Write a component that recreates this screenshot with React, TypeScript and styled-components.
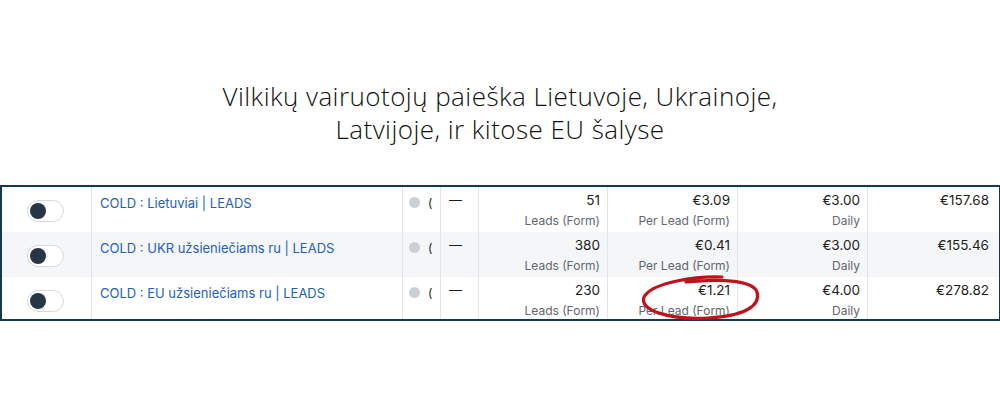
import React from "react";
import styled, { createGlobalStyle } from "styled-components";

const Global = createGlobalStyle`
  body {
    margin: 0;
    background: #fff;
    font-family: Inter, "Noto Sans", sans-serif;
  }
`;

const Page = styled.div`
  width: 1000px;
  height: 400px;
  padding-top: 80px;
  box-sizing: border-box;
`;

const Title = styled.h1`
  margin: 0 0 39px;
  text-align: center;
  font-family: "Open Sans", Lato, sans-serif;
  font-weight: 300;
  font-size: 26px;
  line-height: 33px;
  color: #111;
  letter-spacing: 0.45px;
`;

const Table = styled.div`
  position: relative;
  width: 1000px;
  box-sizing: border-box;
  border: 2px solid #163a4c;
  border-right-width: 1px;
`;

const Row = styled.div<{ $alt?: boolean; $h: number }>`
  display: grid;
  grid-template-columns: 89px 311px 38px 38px 129px 130px 130px 1fr;
  height: ${(p) => p.$h}px;
  background: ${(p) => (p.$alt ? "#f5f6f7" : "#fff")};
`;

const Cell = styled.div<{ $right?: boolean }>`
  box-sizing: border-box;
  border-left: 1px solid #e3e5e8;
  padding: 5px 7px 0 8px;
  overflow: hidden;
  text-align: ${(p) => (p.$right ? "right" : "left")};
  &:first-child {
    border-left: none;
  }
  &:last-child {
    padding-right: 10px;
  }
`;

const ToggleCell = styled(Cell)`
  padding: 13px 0 0 25px;
`;

const Toggle = styled.div`
  width: 37px;
  height: 22px;
  box-sizing: border-box;
  border: 1px solid #d6d9dd;
  border-radius: 11px;
  background: #fff;
  position: relative;
  &::after {
    content: "";
    position: absolute;
    left: 2px;
    top: 2px;
    width: 16px;
    height: 16px;
    border-radius: 50%;
    background: #263645;
  }
`;

const Name = styled.a`
  font-size: 13px;
  line-height: 17px;
  color: #2461b8;
  text-decoration: none;
`;

const StatusCell = styled(Cell)`
  display: flex;
  gap: 8px;
  padding-top: 10px;
  padding-left: 6px;
`;

const Dot = styled.span`
  width: 11px;
  height: 11px;
  border-radius: 50%;
  background: #ccd0d5;
  flex-shrink: 0;
`;

const Paren = styled.span`
  font-size: 12px;
  line-height: 11px;
  color: #1c1e21;
`;

const Dash = styled.span`
  display: block;
  font-size: 13px;
  line-height: 17px;
  color: #1c1e21;
`;

const Value = styled.div`
  font-size: 13.5px;
  line-height: 17px;
  color: #1c1e21;
`;

const Sub = styled.div`
  margin-top: 4px;
  font-size: 12px;
  line-height: 15px;
  color: #606770;
`;

const Circle = styled.svg`
  position: absolute;
  left: 636px;
  top: 85px;
  pointer-events: none;
`;

type RowData = {
  name: string;
  results: string;
  cost: string;
  budget: string;
  spent: string;
};

const rows: RowData[] = [
  { name: "COLD : Lietuviai | LEADS", results: "51", cost: "€3.09", budget: "€3.00", spent: "€157.68" },
  { name: "COLD : UKR užsieniečiams ru | LEADS", results: "380", cost: "€0.41", budget: "€3.00", spent: "€155.46" },
  { name: "COLD : EU užsieniečiams ru | LEADS", results: "230", cost: "€1.21", budget: "€4.00", spent: "€278.82" },
];

const heights = [45, 45, 42];

export default function App() {
  return (
    <Page>
      <Global />
      <Title>
        Vilkikų vairuotojų paieška Lietuvoje, Ukrainoje,
        <br />
        Latvijoje, ir kitose EU šalyse
      </Title>
      <Table>
        {rows.map((r, i) => (
          <Row key={r.name} $alt={i === 1} $h={heights[i]}>
            <ToggleCell>
              <Toggle />
            </ToggleCell>
            <Cell>
              <Name href="#">{r.name}</Name>
            </Cell>
            <StatusCell>
              <Dot />
              <Paren>(</Paren>
            </StatusCell>
            <Cell>
              <Dash>—</Dash>
            </Cell>
            <Cell $right>
              <Value>{r.results}</Value>
              <Sub>Leads (Form)</Sub>
            </Cell>
            <Cell $right>
              <Value>{r.cost}</Value>
              <Sub>Per Lead (Form)</Sub>
            </Cell>
            <Cell $right>
              <Value>{r.budget}</Value>
              <Sub>Daily</Sub>
            </Cell>
            <Cell $right>
              <Value>{r.spent}</Value>
            </Cell>
          </Row>
        ))}
        <Circle width="130" height="52" viewBox="0 0 130 52">
          <path
            d="M84 5 C60 4 14 10 6 25 C1 38 30 48 70 46 C106 44 123 34 119 20 C115 9 86 6 48 10"
            fill="none"
            stroke="#c0121b"
            strokeWidth="3.2"
            strokeLinecap="round"
          />
        </Circle>
      </Table>
    </Page>
  );
}
